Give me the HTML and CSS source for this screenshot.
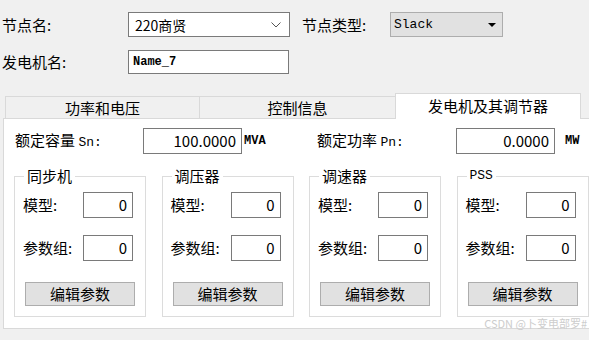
FILE: index.html
```html
<!DOCTYPE html>
<html lang="zh-CN">
<head>
    <meta charset="UTF-8">
    <meta name="viewport" content="width=device-width, initial-scale=1.0">
    <title>发电机参数</title>
    <link rel="stylesheet" href="styles.css">
</head>
<body>
    <div class="form">
        <div class="form-row">
            <span class="label label-name">节点名:</span>
            <div class="combo combo-node">
                <span>220商贤</span>
                <svg class="chevron" width="10" height="6" viewBox="0 0 10 6"><polyline points="0.5,0.5 5,5 9.5,0.5" fill="none" stroke="#555" stroke-width="1"/></svg>
            </div>
            <span class="label label-type">节点类型:</span>
            <div class="combo combo-type">
                <span class="mono">Slack</span>
                <svg class="arrow" width="8" height="4" viewBox="0 0 8 4"><polygon points="0,0 8,0 4,4" fill="#000"/></svg>
            </div>
        </div>
        <div class="form-row row-gen">
            <span class="label label-name">发电机名:</span>
            <div class="textbox mono">Name_7</div>
        </div>
    </div>

    <div class="tabs">
        <div class="tab tab-1">功率和电压</div>
        <div class="tab tab-2">控制信息</div>
        <div class="tab tab-3 active">发电机及其调节器</div>
    </div>

    <div class="panel">
        <div class="rated-row">
            <span class="rated-label rated-label-1">额定容量 <span class="mono">Sn:</span></span>
            <div class="num-input wide">100.0000</div>
            <span class="unit unit-1 mono">MVA</span>
            <span class="rated-label rated-label-2">额定功率 <span class="mono">Pn:</span></span>
            <div class="num-input wide">0.0000</div>
            <span class="unit unit-2 mono">MW</span>
        </div>

        <div class="groups">
            <div class="group">
                <span class="group-title">同步机</span>
                <div class="group-row"><span class="group-label">模型:</span><div class="num-input small">0</div></div>
                <div class="group-row"><span class="group-label">参数组:</span><div class="num-input small">0</div></div>
                <button class="edit-btn">编辑参数</button>
            </div>
            <div class="group">
                <span class="group-title">调压器</span>
                <div class="group-row"><span class="group-label">模型:</span><div class="num-input small">0</div></div>
                <div class="group-row"><span class="group-label">参数组:</span><div class="num-input small">0</div></div>
                <button class="edit-btn">编辑参数</button>
            </div>
            <div class="group">
                <span class="group-title">调速器</span>
                <div class="group-row"><span class="group-label">模型:</span><div class="num-input small">0</div></div>
                <div class="group-row"><span class="group-label">参数组:</span><div class="num-input small">0</div></div>
                <button class="edit-btn">编辑参数</button>
            </div>
            <div class="group">
                <span class="group-title mono">PSS</span>
                <div class="group-row"><span class="group-label">模型:</span><div class="num-input small">0</div></div>
                <div class="group-row"><span class="group-label">参数组:</span><div class="num-input small">0</div></div>
                <button class="edit-btn">编辑参数</button>
            </div>
        </div>
    </div>

    <div class="watermark">CSDN @卜变电部罗#</div>
</body>
</html>
```

FILE: styles.css
```css
body {
    margin: 0;
    width: 589px;
    height: 340px;
    overflow: hidden;
    position: relative;
    background: #f0f0f0;
    font-family: "Noto Sans CJK SC", "Liberation Sans", sans-serif;
    font-size: 15px;
    color: #000;
}
.mono {
    font-family: "Liberation Mono", "Noto Sans CJK SC", monospace;
    font-size: 13px;
}

/* top form */
.form {
    padding: 12px 0 0 2px;
}
.form-row {
    display: flex;
    align-items: center;
    height: 25px;
}
.row-gen {
    margin-top: 13px;
    height: 24px;
}
.label {
    line-height: 20px;
}
.label-name {
    width: 126px;
}
.label-type {
    width: 88px;
    margin-left: 12px;
}
.combo {
    box-sizing: border-box;
    height: 25px;
    display: flex;
    align-items: center;
    justify-content: space-between;
    line-height: 20px;
}
.combo-node {
    width: 162px;
    background: #fff;
    border: 1px solid #7a7a7a;
    padding: 0 8px 0 6px;
    font-size: 14px;
}
.combo-type {
    width: 113px;
    background: #e1e1e1;
    border: 1px solid #adadad;
    padding: 0 6px 0 3px;
}
.textbox {
    box-sizing: border-box;
    width: 161px;
    height: 24px;
    background: #fff;
    border: 1px solid #7a7a7a;
    padding-left: 4px;
    line-height: 22px;
    font-size: 12px;
    font-weight: bold;
}

/* tabs */
.tabs {
    display: flex;
    align-items: flex-end;
    height: 25px;
    margin-top: 19px;
    padding-left: 5px;
}
.tab {
    box-sizing: border-box;
    height: 22px;
    border: 1px solid #d9d9d9;
    border-bottom: none;
    background: #f0f0f0;
    text-align: center;
    line-height: 21px;
}
.tab-1 {
    width: 195px;
}
.tab-2 {
    width: 197px;
    margin-left: -1px;
}
.tab-3 {
    width: 186px;
    margin-left: -1px;
}
.tab.active {
    height: 26px;
    margin-bottom: -1px;
    background: #fff;
    position: relative;
    z-index: 1;
    line-height: 24px;
}

/* panel */
.panel {
    box-sizing: border-box;
    width: 586px;
    height: 211px;
    margin-left: 3px;
    border: 1px solid #d9d9d9;
    border-right: none;
    background: #fff;
    padding: 9px 0 0 11px;
}
.rated-row {
    display: flex;
    align-items: center;
    height: 26px;
}
.rated-label {
    line-height: 20px;
}
.rated-label-1 {
    width: 128px;
}
.rated-label-2 {
    width: 139px;
}
.num-input {
    box-sizing: border-box;
    height: 26px;
    border: 1px solid #7a7a7a;
    background: #fff;
    text-align: right;
    padding-right: 5px;
    line-height: 24px;
}
.num-input.wide {
    width: 99px;
}
.num-input.small {
    width: 50px;
}
.unit {
    font-weight: bold;
    font-size: 12px;
}
.unit-1 {
    width: 73px;
    margin-left: 2px;
}
.unit-2 {
    margin-left: 10px;
}

.groups {
    display: grid;
    grid-template-columns: repeat(4, 132px);
    column-gap: 15.5px;
    margin-top: 22px;
    margin-left: -1px;
}
.group {
    box-sizing: border-box;
    height: 141px;
    border: 1px solid #dcdcdc;
    padding: 15px 0 0 8px;
    position: relative;
}
.group-title {
    position: absolute;
    top: -10px;
    left: 9px;
    padding: 0 3px;
    background: #fff;
    line-height: 18px;
}
.group-row {
    display: flex;
    align-items: center;
    height: 26px;
}
.group-row + .group-row {
    margin-top: 17px;
}
.group-label {
    width: 60px;
    line-height: 20px;
}
.edit-btn {
    display: block;
    box-sizing: border-box;
    width: 110px;
    height: 24px;
    margin: 21px 0 0 2px;
    padding: 0;
    border: 1px solid #adadad;
    background: #e1e1e1;
    font-family: "Noto Sans CJK SC", sans-serif;
    font-size: 15px;
    line-height: 22px;
    color: #000;
}

.watermark {
    position: absolute;
    right: 2px;
    top: 316px;
    font-size: 11px;
    line-height: 14px;
    color: #cdcdcd;
}
```
